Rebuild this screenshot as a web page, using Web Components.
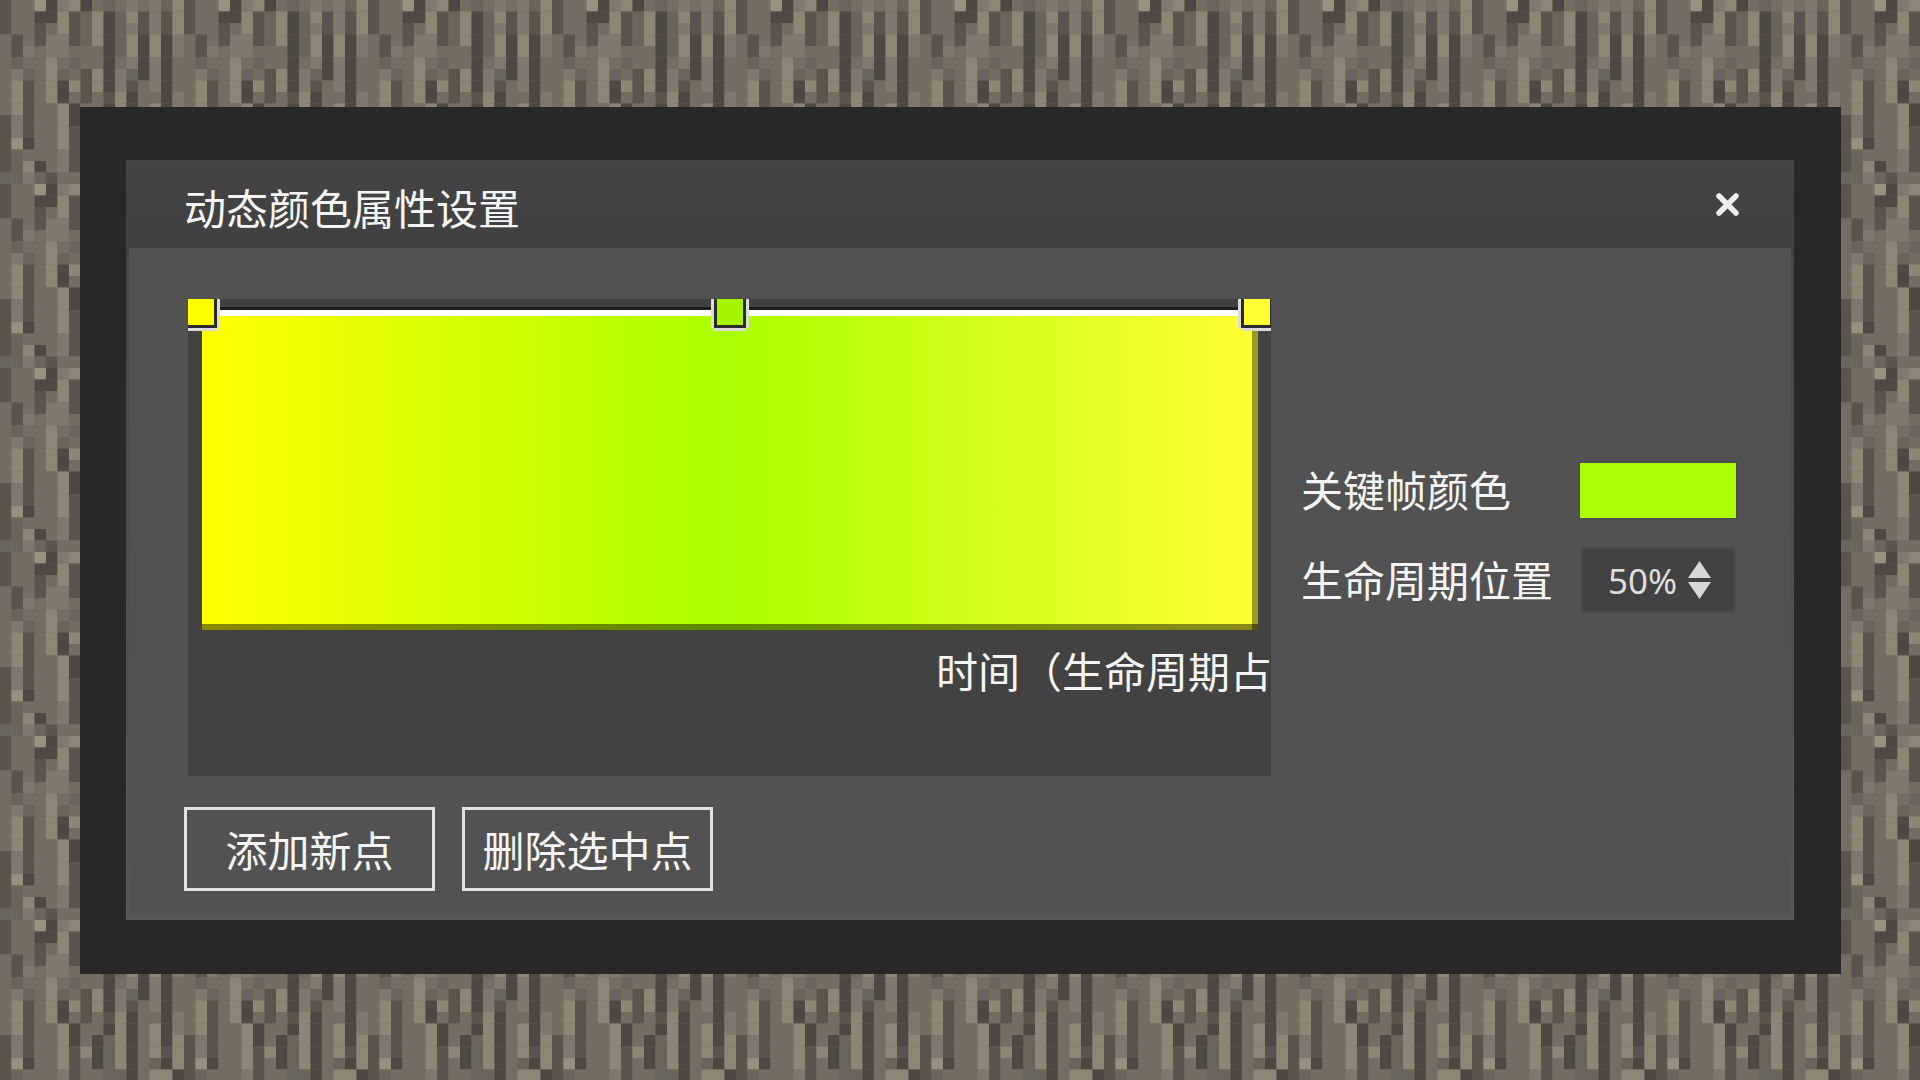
<!DOCTYPE html>
<html lang="zh-CN">
<head>
<meta charset="utf-8">
<title>动态颜色属性设置</title>
<style>
  html, body { margin: 0; padding: 0; background: #6f695e; }
  body { font-family: "Noto Sans CJK SC", "Noto Sans", sans-serif; color: #f4f4f4; }
</style>
</head>
<body>
<bark-screen>
  <color-dialog heading="动态颜色属性设置">
    <gradient-editor label="时间（生命周期占比）"></gradient-editor>
    <key-panel slot="side"></key-panel>
    <ui-button slot="actions">添加新点</ui-button>
    <ui-button slot="actions">删除选中点</ui-button>
  </color-dialog>
</bark-screen>

<script>
// texture cells, one letter per 11.5px block, 16x16 tile
const BARK_ROWS = [
  'bddgaefadcdedecf',
  'bddaafbcfacfbebf',
  'bddbdfbcfacebebf',
  'dbdbeebcfacfafae',
  'dbedeedddacfafae',
  'dcddfdcddadeaead',
  'decdfcdbfaecaead',
  'dfbdfafbfaebdead',
  'dfbdfadbdbfaddae',
  'dfbddfaddafadfae',
  'bebddfadacfadfaf',
  'bebddfbfacfadfbf',
  'bgaddfbdacfadcaf',
  'bcdddebddccadffa',
  'bcfadebdddcaddad',
  'ccecbddddddcddad',
];
const BARK_COLORS = {
  a: '#4e4842', b: '#5a544c', c: '#6a655a', d: '#736d62',
  e: '#7e796c', f: '#8c8677', g: '#989182',
};

class BarkScreen extends HTMLElement {
  connectedCallback() {
    let cells = '';
    BARK_ROWS.forEach((row, y) => {
      [...row].forEach((key, x) => {
        cells += `<rect x="${x * 11.5}" y="${y * 11.5}" width="11.5" height="11.5" fill="${BARK_COLORS[key]}"/>`;
      });
    });
    this.attachShadow({ mode: 'open' }).innerHTML = `
      <style>
        :host { display: block; position: relative; width: 1920px; height: 1080px; overflow: hidden; }
        svg { position: absolute; inset: 0; }
        .wrap { position: relative; box-sizing: border-box; height: 100%; padding: 107px 79px 106px 80px; }
      </style>
      <svg width="1920" height="1080">
        <defs><pattern id="bark" width="184" height="184" patternUnits="userSpaceOnUse">${cells}</pattern></defs>
        <rect width="1920" height="1080" fill="url(#bark)"/>
      </svg>
      <div class="wrap"><slot></slot></div>
    `;
  }
}

class ColorDialog extends HTMLElement {
  connectedCallback() {
    this.attachShadow({ mode: 'open' }).innerHTML = `
      <style>
        :host { display: block; box-sizing: border-box; height: 867px; padding: 53px 47px 54px 46px; background: #282828; }
        .dialog {
          height: 760px; display: flex; flex-direction: column;
          background: linear-gradient(#444 0, #404040 88px, #464646 100px, #585858 100%);
        }
        header { flex: none; height: 88px; display: flex; justify-content: space-between; padding: 0 54px 0 58px; }
        h1 { margin: 0; font: 400 42px/94px "Noto Sans CJK SC", sans-serif; white-space: nowrap; }
        .close { margin-top: 32px; width: 25px; height: 25px; }
        .body { flex: 1; margin: 0 3px 3px; background: #525252; padding-top: 51px; }
        .main { display: flex; align-items: center; margin-left: 59px; }
        .actions { display: flex; gap: 27px; margin: 31px 0 0 55px; }
      </style>
      <div class="dialog">
        <header>
          <h1>${this.getAttribute('heading')}</h1>
          <svg class="close" viewBox="0 0 25 25"><path d="M4 4 21 21M21 4 4 21" stroke="#eee" stroke-width="5.5" stroke-linecap="round"/></svg>
        </header>
        <div class="body">
          <div class="main"><slot></slot><slot name="side"></slot></div>
          <div class="actions"><slot name="actions"></slot></div>
        </div>
      </div>
    `;
  }
}

class GradientEditor extends HTMLElement {
  connectedCallback() {
    this.attachShadow({ mode: 'open' }).innerHTML = `
      <style>
        :host { display: block; flex: none; position: relative; box-sizing: border-box; width: 1083px; height: 477px; padding-top: 8px; background: #424242; overflow: hidden; }
        .plot { margin-left: 14px; width: 1056px; height: 323px; box-sizing: border-box; border-top: 3px solid #1e1e1e; }
        .fill {
          box-sizing: border-box; height: 100%; border-top: 6px solid #fff;
          background: linear-gradient(90deg, #ffff00 0, #aaff00 50%, #ffff33 100%);
          box-shadow: inset -6px 0 0 rgba(0, 0, 0, .4), inset 0 -6px 0 rgba(0, 0, 0, .46);
        }
        .label { margin: 11px 0 0 748px; font: 400 42px/58px "Noto Sans CJK SC", sans-serif; white-space: nowrap; }
        .handle {
          position: absolute; top: 0; box-sizing: border-box; width: 32px; height: 29px;
          background: var(--c); background-clip: padding-box;
          border: solid #2a2a2a; border-width: 0 3px 3px;
          box-shadow: -3px 0 0 #dcdcd4, 3px 0 0 #dcdcd4, 0 3px 0 #dcdcd4;
        }
      </style>
      <div class="plot"><div class="fill"></div></div>
      <div class="handle" style="left: -3px; --c: #ffff00"></div>
      <div class="handle" style="left: 526px; --c: #a6f500"></div>
      <div class="handle" style="left: 1053px; --c: #ffff33"></div>
      <div class="label">${this.getAttribute('label')}</div>
    `;
  }
}

class KeyPanel extends HTMLElement {
  connectedCallback() {
    this.attachShadow({ mode: 'open' }).innerHTML = `
      <style>
        :host { display: grid; grid-template-columns: 1fr auto; align-items: center; justify-items: end; row-gap: 27px; width: 436px; margin: 0 0 2px 30px; font: 400 42px/58px "Noto Sans CJK SC", sans-serif; }
        span { justify-self: start; white-space: nowrap; padding-bottom: 2px; }
        .swatch { width: 158px; height: 57px; box-sizing: border-box; background: #aaff00; border: 1px solid #4a4a55; }
      </style>
      <span>关键帧颜色</span><div class="swatch"></div>
      <span>生命周期位置</span><spin-input value="50%"></spin-input>
    `;
  }
}

class SpinInput extends HTMLElement {
  connectedCallback() {
    this.attachShadow({ mode: 'open' }).innerHTML = `
      <style>
        :host { display: flex; align-items: center; box-sizing: border-box; width: 155px; height: 66px; margin-right: 1px; padding-left: 25px; gap: 11px; background: #424242; border: 2px solid #4b4b4b; color: #dedede; font: 400 35px/1 "Noto Sans", sans-serif; }
        svg { width: 23px; height: 38px; }
      </style>
      <span>${this.getAttribute('value')}</span>
      <svg viewBox="0 0 23 38"><path d="M11.5 0 23 17H0ZM0 21H23L11.5 38Z" fill="#d8d8d8"/></svg>
    `;
  }
}

class UiButton extends HTMLElement {
  connectedCallback() {
    this.attachShadow({ mode: 'open' }).innerHTML = `
      <style>
        :host { display: flex; align-items: center; justify-content: center; box-sizing: border-box; width: 251px; height: 84px; border: 3px solid #e2e2e2; font: 400 42px/1 "Noto Sans CJK SC", sans-serif; white-space: nowrap; }
      </style>
      <slot></slot>
    `;
  }
}

customElements.define('bark-screen', BarkScreen);
customElements.define('color-dialog', ColorDialog);
customElements.define('gradient-editor', GradientEditor);
customElements.define('key-panel', KeyPanel);
customElements.define('spin-input', SpinInput);
customElements.define('ui-button', UiButton);
</script>
</body>
</html>
